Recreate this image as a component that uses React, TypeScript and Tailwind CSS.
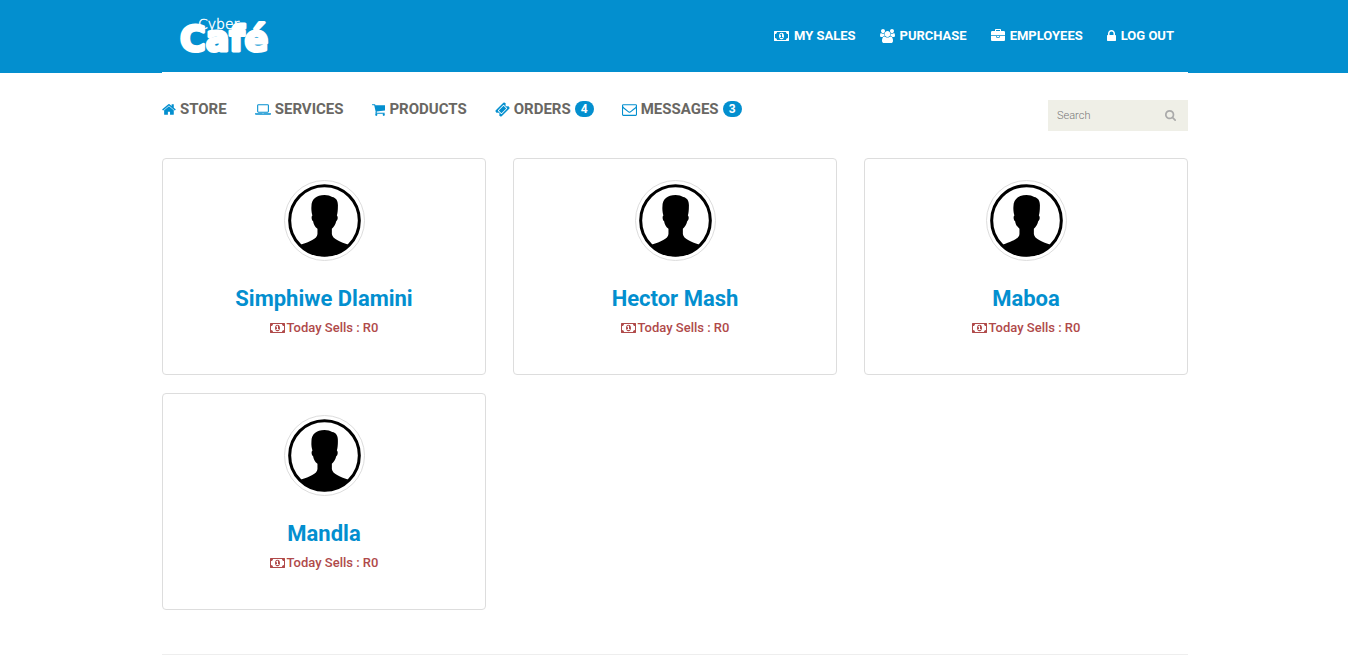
import type { ReactNode } from "react";

type IconShape = { box: string; path: string };

const icons = {
  home: {
    box: "64 0 1664 1792",
    path: "M1472 992v480q0 26-19 45t-45 19h-384v-384h-256v384h-384q-26 0-45-19t-19-45v-480q0-1 .5-3t.5-3l575-474 575 474q1 2 1 6zm223-69l-62 74q-8 9-21 11h-3q-13 0-21-7l-692-577-692 577q-12 8-24 7-13-2-21-11l-62-74q-8-10-7-23.5t11-21.5l719-599q32-26 76-26t76 26l244 204v-195q0-14 9-23t23-9h192q14 0 23 9t9 23v408l219 182q10 8 11 21.5t-7 23.5z",
  },
  laptop: {
    box: "0 0 1920 1792",
    path: "M416 1280q-66 0-113-47t-47-113v-704q0-66 47-113t113-47h1088q66 0 113 47t47 113v704q0 66-47 113t-113 47h-1088zm-32-864v704q0 13 9.5 22.5t22.5 9.5h1088q13 0 22.5-9.5t9.5-22.5v-704q0-13-9.5-22.5t-22.5-9.5h-1088q-13 0-22.5 9.5t-9.5 22.5zm1376 928h160v96q0 40-47 68t-113 28h-1600q-66 0-113-28t-47-68v-96h1760zm-720 96q16 0 16-16t-16-16h-160q-16 0-16 16t16 16h160z",
  },
  cart: {
    box: "64 0 1664 1792",
    path: "M704 1536q0 52-38 90t-90 38-90-38-38-90 38-90 90-38 90 38 38 90zm896 0q0 52-38 90t-90 38-90-38-38-90 38-90 90-38 90 38 38 90zm128-1088v512q0 24-16.5 42.5t-40.5 21.5l-1044 122q13 60 13 70 0 16-24 64h920q26 0 45 19t19 45-19 45-45 19h-1024q-26 0-45-19t-19-45q0-11 8-31.5t16-36 21.5-40 15.5-29.5l-177-823h-204q-26 0-45-19t-19-45 19-45 45-19h256q16 0 28.5 6.5t19.5 15.5 13 24.5 8 26 5.5 29.5 4.5 26h1201q26 0 45 19t19 45z",
  },
  ticket: {
    box: "0 0 1792 1792",
    path: "M1024 452l316 316-572 572-316-316zm-211 979l618-618q19-19 19-45t-19-45l-362-362q-18-18-45-18t-45 18l-618 618q-19 19-19 45t19 45l362 362q18 18 45 18t45-18zm889-637l-907 908q-37 37-90.5 37t-90.5-37l-126-126q56-56 56-136t-56-136-136-56-136 56l-125-126q-37-37-37-90.5t37-90.5l907-906q37-37 90.5-37t90.5 37l125 125q-56 56-56 136t56 136 136 56 136-56l126 125q37 37 37 90.5t-37 90.5z",
  },
  envelope: {
    box: "0 0 1792 1792",
    path: "M1664 1504v-768q-32 36-69 66-268 206-426 338-51 43-83 67t-86.5 48.5-102.5 24.5h-2q-48 0-102.5-24.5t-86.5-48.5-83-67q-158-132-426-338-37-30-69-66v768q0 13 9.5 22.5t22.5 9.5h1472q13 0 22.5-9.5t9.5-22.5zm0-1051v-24.5l-.5-13-3-12.5-5.5-9-9-7.5-14-2.5h-1472q-13 0-22.5 9.5t-9.5 22.5q0 168 147 284 193 152 401 317 6 5 35 29.5t46 37.5 44.5 31.5 50.5 27.5 43 9h2q20 0 43-9t50.5-27.5 44.5-31.5 46-37.5 35-29.5q208-165 401-317 54-43 100.5-115.5t46.5-131.5zm128-37v1088q0 66-47 113t-113 47h-1472q-66 0-113-47t-47-113v-1088q0-66 47-113t113-47h1472q66 0 113 47t47 113z",
  },
  search: {
    box: "64 128 1664 1664",
    path: "M1216 832q0-185-131.5-316.5t-316.5-131.5-316.5 131.5-131.5 316.5 131.5 316.5 316.5 131.5 316.5-131.5 131.5-316.5zm512 832q0 52-38 90t-90 38q-54 0-90-38l-343-342q-179 124-399 124-143 0-273.5-55.5t-225-150-150-225-55.5-273.5 55.5-273.5 150-225 225-150 273.5-55.5 273.5 55.5 225 150 150 225 55.5 273.5q0 220-124 399l343 343q37 37 37 90z",
  },
  lock: {
    box: "320 0 1152 1792",
    path: "M640 768h512v-192q0-106-75-181t-181-75-181 75-75 181v192zm832 96v576q0 40-28 68t-68 28h-960q-40 0-68-28t-28-68v-576q0-40 28-68t68-28h32v-192q0-184 132-316t316-132 316 132 132 316v192h32q40 0 68 28t28 68z",
  },
  briefcase: {
    box: "0 0 1792 1792",
    path: "M640 256h512v-128h-512v128zm1152 640v480q0 66-47 113t-113 47h-1472q-66 0-113-47t-47-113v-480h672v160q0 26 19 45t45 19h320q26 0 45-19t19-45v-160h672zm-768 0v128h-256v-128h256zm768-480v384h-1792v-384q0-66 47-113t113-47h352v-160q0-40 28-68t68-28h576q40 0 68 28t28 68v160h352q66 0 113 47t47 113z",
  },
  group: {
    box: "0 0 1920 1792",
    path: "M593 896q-162 5-265 128h-134q-82 0-138-40.5t-56-118.5q0-353 124-353 6 0 43.5 21t97.5 42.5 119 21.5q67 0 133-23-5 37-5 66 0 139 81 256zm1071 637q0 120-73 189.5t-194 69.5h-874q-121 0-194-69.5t-73-189.5q0-53 3.5-103.5t14-109 26.5-108.5 43-97.5 62-81 85.5-53.5 111.5-20q10 0 43 21.5t73 48 107 48 135 21.5 135-21.5 107-48 73-48 43-21.5q61 0 111.5 20t85.5 53.5 62 81 43 97.5 26.5 108.5 14 109 3.5 103.5zm-1024-1277q0 106-75 181t-181 75-181-75-75-181 75-181 181-75 181 75 75 181zm704 384q0 159-112.5 271.5t-271.5 112.5-271.5-112.5-112.5-271.5 112.5-271.5 271.5-112.5 271.5 112.5 112.5 271.5zm576 225q0 78-56 118.5t-138 40.5h-134q-103-123-265-128 81-117 81-256 0-29-5-66 66 23 133 23 59 0 119-21.5t97.5-42.5 43.5-21q124 0 124 353zm-128-609q0 106-75 181t-181 75-181-75-75-181 75-181 181-75 181 75 75 181z",
  },
  money: {
    box: "0 0 1920 1792",
    path: "M768 1152h384v-96h-128v-448h-114l-148 137 77 80q42-37 55-57h2v288h-128v96zm512-256q0 70-21 142t-59.5 134-101.5 101-138 39-138-39-101.5-101-59.5-134-21-142 21-142 59.5-134 101.5-101 138-39 138 39 101.5 101 59.5 134 21 142zm512 256v-512q-106 0-181-75t-75-181h-1152q0 106-75 181t-181 75v512q106 0 181 75t75 181h1152q0-106 75-181t181-75zm128-832v1152q0 26-19 45t-45 19h-1792q-26 0-45-19t-19-45v-1152q0-26 19-45t45-19h1792q26 0 45 19t19 45z",
  },
} satisfies Record<string, IconShape>;

type IconName = keyof typeof icons;

function Icon({ name, className }: { name: IconName; className: string }) {
  return (
    <svg viewBox={icons[name].box} fill="currentColor" aria-hidden="true" className={`shrink-0 ${className}`}>
      <path d={icons[name].path} />
    </svg>
  );
}

function Container({ children }: { children: ReactNode }) {
  return (
    <div className="pl-0.5">
      <div className="mx-auto max-w-[1026px]">{children}</div>
    </div>
  );
}

function Logo() {
  return (
    <svg viewBox="0 0 100 56" className="h-14 w-[100px]" role="img" aria-label="Cyber Café">
      <text
        x="20"
        y="21"
        fill="#fff"
        stroke="#fff"
        strokeWidth="0.4"
        fontFamily="'DejaVu Sans', sans-serif"
        fontSize="14"
        fontWeight="200"
      >
        Cyber
      </text>
      <text
        x="2"
        y="43"
        fill="#fff"
        stroke="#fff"
        strokeWidth="3"
        strokeLinejoin="round"
        fontFamily="'DejaVu Sans', sans-serif"
        fontSize="35"
        fontWeight="700"
      >
        Café
      </text>
    </svg>
  );
}

const accountLinks: { icon: IconName; label: string }[] = [
  { icon: "money", label: "MY SALES" },
  { icon: "group", label: "PURCHASE" },
  { icon: "briefcase", label: "EMPLOYEES" },
  { icon: "lock", label: "LOG OUT" },
];

const sections: { icon: IconName; label: string; count?: number }[] = [
  { icon: "home", label: "STORE" },
  { icon: "laptop", label: "SERVICES" },
  { icon: "cart", label: "PRODUCTS" },
  { icon: "ticket", label: "ORDERS", count: 4 },
  { icon: "envelope", label: "MESSAGES", count: 3 },
];

const employees = [
  { name: "Simphiwe Dlamini", sells: "R0" },
  { name: "Hector Mash", sells: "R0" },
  { name: "Maboa", sells: "R0" },
  { name: "Mandla", sells: "R0" },
];

function Avatar() {
  return (
    <div className="rounded-full border border-[#ddd] p-[3px]">
      <svg viewBox="51 41 218 218" className="size-[73px]" aria-hidden="true">
        <circle cx="160" cy="150" r="104" fill="#fff" stroke="#000" strokeWidth="9" />
        <path d="M139 175C131 168 127 160 126 152C121 150 120 137 124 135C122 129 120 119 121 108C121 86 136 74 160 74C170 74 177 76 183 80C195 82 201 92 200 108C200 118 199 129 197 135C201 138 200 150 195 152C193 161 188 169 182 175V190C184 206 206 212 230 222C213 244 188 257 160 257C132 257 107 244 90 222C115 212 138 206 139 190Z" />
      </svg>
    </div>
  );
}

export default function App() {
  return (
    <div className="bg-white font-['Roboto',sans-serif] text-[#696763]">
      <header className="bg-[#038fcf]">
        <Container>
          <div className="flex h-[73px] justify-between border-b border-white pt-2 pr-[14px] pl-4">
            <a href="#home">
              <Logo />
            </a>
            <nav aria-label="Account" className="pt-[19px]">
              <ul className="flex gap-6">
                {accountLinks.map(({ icon, label }) => (
                  <li key={label}>
                    <a
                      href="#account"
                      className="flex items-center gap-[5px] text-[13px] leading-[18px] font-bold text-white"
                    >
                      <Icon name={icon} className="h-[14px] w-auto" />
                      {label}
                    </a>
                  </li>
                ))}
              </ul>
            </nav>
          </div>
        </Container>
      </header>

      <Container>
        <div className="flex justify-between pt-[27px]">
          <nav aria-label="Main">
            <ul className="flex gap-7">
              {sections.map(({ icon, label, count }) => (
                <li key={label}>
                  <a href="#section" className="flex items-center gap-1 text-[15px] leading-[18px] font-bold">
                    <Icon name={icon} className="h-[15px] w-auto text-[#038fcf]" />
                    {label}
                    {count !== undefined && (
                      <span className="flex h-4 w-[19px] items-center justify-center rounded-full bg-[#038fcf] text-xs leading-none font-bold text-white">
                        {count}
                      </span>
                    )}
                  </a>
                </li>
              ))}
            </ul>
          </nav>
          <form role="search" className="flex h-[31px] w-[140px] items-center bg-[#efefe7] pr-3 pl-[9px]">
            <input
              type="search"
              aria-label="Search"
              placeholder="Search"
              className="h-[31px] min-w-0 flex-1 text-[11px] font-light outline-none placeholder:text-[#777]"
            />
            <button type="submit" aria-label="Submit search" className="text-[#aaa]">
              <Icon name="search" className="size-[11px]" />
            </button>
          </form>
        </div>

        <main className="grid grid-cols-3 gap-x-[27px] gap-y-[18px] pt-[27px]">
          {employees.map(({ name, sells }) => (
            <article
              key={name}
              className="flex flex-col items-center rounded border border-[#ddd] px-4 pt-[21px] pb-9"
            >
              <Avatar />
              <h2 className="pt-6 text-[22px] leading-7 font-bold">
                <a href="#employee" className="text-[#038fcf]">
                  {name}
                </a>
              </h2>
              <p className="flex items-center gap-0.5 pt-[5px] text-[13px] leading-5 font-medium text-[#b04a4a]">
                <Icon name="money" className="h-[14px] w-auto" />
                Today Sells : {sells}
              </p>
            </article>
          ))}
        </main>

        <footer className="mt-11 border-t border-[#eee]" />
      </Container>
    </div>
  );
}
